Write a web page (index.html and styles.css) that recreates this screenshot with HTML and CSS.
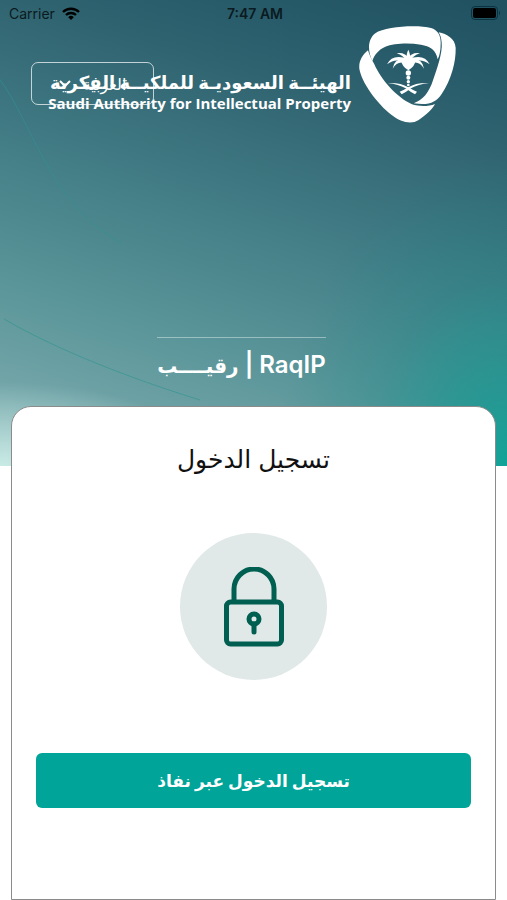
FILE: index.html
```html
<!DOCTYPE html>
<html lang="ar">
<head>
  <meta charset="UTF-8">
  <meta name="viewport" content="width=device-width, initial-scale=1.0">
  <title>RaqIP | رقيب</title>
  <link rel="stylesheet" href="styles.css">
</head>
<body>

  <!-- Background lines -->
  <svg class="bg-lines" viewBox="0 0 507 466" preserveAspectRatio="none" aria-hidden="true">
    <path d="M0 80 C22 108 40 165 75 205 C90 223 104 232 122 244"/>
    <path d="M4 319 C45 343 110 372 200 400"/>
  </svg>

  <!-- Status bar -->
  <div class="status-bar">
    <div class="carrier">
      <span>Carrier</span>
      <svg class="wifi" viewBox="0 0 18 13" aria-hidden="true">
        <path d="M1 5 A11.5 11.5 0 0 1 17 5"/>
        <path d="M4 8 A7.2 7.2 0 0 1 14 8"/>
        <path class="dot" d="M9 13 L6.2 10.2 A4 4 0 0 1 11.8 10.2 Z"/>
      </svg>
    </div>
    <div class="time">7:47 AM</div>
    <div class="battery-box">
      <svg class="battery" viewBox="0 0 30 14" aria-hidden="true">
        <rect class="shell" x="0.5" y="0.5" width="26" height="13" rx="3.5"/>
        <rect x="2" y="2" width="23" height="10" rx="2"/>
        <path class="cap" d="M28 4.5 Q30 7 28 9.5 Z"/>
      </svg>
    </div>
  </div>

  <!-- Header with logo and language button -->
  <header class="header">
    <div class="org-name">
      <p class="org-ar" dir="rtl">الهيئــة السعوديـة للملكيــة الفكرية</p>
      <p class="org-en">Saudi Authority for Intellectual Property</p>
    </div>
    <svg class="logo" viewBox="26 32 291 291" role="img" aria-label="SAIP">
      <path d="M66 137 C51 105 52 72 75 54 C105 32 205 28 242 38 C262 44 272 60 271 85 C271 105 268 120 262 132 C258 104 238 92 212 88 C175 82 130 84 105 94 C85 103 72 118 66 137Z"/>
      <path d="M265 51 C290 56 314 70 316 97 C317 140 303 192 274 236 C256 262 235 271 190 264 C218 254 236 232 248 195 C260 160 277 112 274 82 C273 68 270 60 265 51Z"/>
      <path d="M53 105 C35 120 25 138 27 160 C33 200 80 265 125 300 C150 320 183 329 205 314 C228 298 246 282 254 266 C235 274 205 274 185 267 C140 247 92 193 72 147 C64 132 57 120 53 105Z"/>
      <!-- palm leaves -->
      <path d="M174 103 Q182 118 178 136 H170 Q166 118 174 103Z"/>
      <path d="M139 114 Q162 109 178 131 L171 140 Q160 120 139 114Z"/>
      <path d="M209 114 Q186 109 170 131 L177 140 Q188 120 209 114Z"/>
      <path d="M110 147 Q127 112 176 132 L172 145 Q138 125 110 147Z"/>
      <path d="M238 147 Q221 112 172 132 L176 145 Q210 125 238 147Z"/>
      <path d="M127 160 Q132 123 175 133 L174 148 Q144 131 127 160Z"/>
      <path d="M221 160 Q216 123 173 133 L174 148 Q204 131 221 160Z"/>
      <path d="M152 134 H196 Q194 153 174 165 Q154 153 152 134Z"/>
      <!-- trunk -->
      <circle cx="174" cy="173" r="8"/>
      <circle cx="174" cy="187" r="6"/>
      <circle cx="174" cy="199" r="5"/>
      <circle cx="174" cy="209" r="4"/>
      <!-- swords -->
      <path d="M112 203 Q150 201 174 216 Q190 226 200 229 L194 237 Q180 230 166 219 Q145 207 112 203Z"/>
      <path d="M236 203 Q198 201 174 216 Q158 226 148 229 L154 237 Q168 230 182 219 Q203 207 236 203Z"/>
    </svg>
    <button class="lang-btn" type="button" dir="rtl">
      العربية
      <svg class="chevron" viewBox="0 0 12 8" aria-hidden="true"><path d="M1 1 L6 6 L11 1"/></svg>
    </button>
  </header>

  <!-- App name -->
  <div class="app-name">
    <h1 dir="ltr"><bdi>رقيــــب</bdi> | RaqIP</h1>
  </div>

  <!-- Login card -->
  <main class="card">
    <h2 class="title" dir="rtl">تسجيل الدخول</h2>
    <div class="lock-circle">
      <svg class="lock" viewBox="0 0 60 80" aria-hidden="true">
        <path d="M10 33 V22 A20 20 0 0 1 50 22 V33"/>
        <rect x="2.5" y="35" width="55" height="42" rx="4"/>
        <circle cx="30" cy="52" r="5"/>
        <path d="M30 57 V65"/>
      </svg>
    </div>
    <button class="login-btn" type="button" dir="rtl">تسجيل الدخول عبر نفاذ</button>
  </main>

</body>
</html>
```
FILE: styles.css
```css
:root {
  --primary-color: #00a499;
  --lock-color: #005f50;
  --circle-color: #e0e9e8;
  --card-border: #8b8b8b;
}

* {
  margin: 0;
  padding: 0;
  box-sizing: border-box;
}

body {
  font-family: Inter, 'DejaVu Sans', sans-serif;
  min-height: 100vh;
  display: flex;
  flex-direction: column;
  position: relative;
  background:
    radial-gradient(ellipse 210px 84px at 0 466px, #c9ebe6 0%, rgba(201, 235, 230, 0.65) 35%, rgba(201, 235, 230, 0) 100%) 0 0 / 100% 466px no-repeat,
    radial-gradient(ellipse 230px 310px at 100% 466px, #12a398 0%, rgba(18, 155, 146, 0.7) 22%, rgba(18, 140, 135, 0.25) 60%, rgba(18, 130, 130, 0) 100%) 0 0 / 100% 466px no-repeat,
    linear-gradient(197deg, #205262 2%, #2f6370 24%, #437d86 48%, #5a9599 70%, #7fadb0 96%) 0 0 / 100% 466px no-repeat,
    #fff;
}

.bg-lines {
  position: absolute;
  top: 0;
  left: 0;
  width: 100%;
  height: 466px;
  z-index: -1;
  fill: none;
  stroke: #2f9590;
  stroke-width: 1;
  opacity: 0.6;
}

/* Status bar */
.status-bar {
  display: grid;
  grid-template-columns: 1fr auto 1fr;
  align-items: center;
  height: 26px;
  padding: 0 6px 0 9px;
  font-size: 14px;
  color: #0b1a20;
}

.carrier {
  display: flex;
  align-items: center;
  gap: 7px;
}

.wifi {
  width: 18px;
  height: 13px;
  fill: none;
  stroke: #000;
  stroke-width: 2.4;
}

.wifi .dot {
  fill: #000;
  stroke: none;
}

.time {
  font-weight: 600;
}

.battery-box {
  display: flex;
  justify-content: flex-end;
}

.battery {
  width: 30px;
  height: 14px;
}

.battery .shell {
  fill: none;
  stroke: #0c3340;
}

.battery .cap {
  fill: #0c3340;
}

/* Header */
.header {
  display: flex;
  justify-content: flex-end;
  gap: 8px;
  padding-right: 51px;
  position: relative;
  color: #fff;
}

.org-name {
  padding-top: 46px;
  text-align: right;
  white-space: nowrap;
}

.org-ar {
  font-size: 18px;
  font-weight: bold;
  line-height: 22px;
}

.org-en {
  font-family: 'Open Sans', sans-serif;
  font-size: 15px;
  font-weight: bold;
  line-height: 18px;
}

.logo {
  width: 97px;
  height: 97px;
  fill: #fff;
}

/* Language button lies over the organisation name */
.lang-btn {
  position: absolute;
  top: 36px;
  left: 31px;
  width: 123px;
  height: 43px;
  display: flex;
  align-items: center;
  justify-content: center;
  gap: 12px;
  background: none;
  border: 1px solid rgba(255, 255, 255, 0.7);
  border-radius: 7px;
  color: #fff;
  font-family: inherit;
  font-size: 16px;
  cursor: pointer;
}

.chevron {
  width: 12px;
  height: 8px;
  fill: none;
  stroke: #fff;
  stroke-width: 2;
}

/* App name */
.app-name {
  align-self: center;
  margin-top: 214px;
  margin-right: 24px;
  padding-top: 10px;
  border-top: 1px solid rgba(255, 255, 255, 0.4);
  color: #fff;
}

.app-name h1 {
  font-size: 24px;
  font-weight: 600;
  line-height: 34px;
}

.app-name bdi {
  font-size: 20px;
  line-height: 20px;
}

/* Login card */
.card {
  flex: 1;
  display: flex;
  flex-direction: column;
  align-items: center;
  margin: 24px 11px 0;
  padding: 32px 24px 90px;
  background-color: #fff;
  border: 1px solid var(--card-border);
  border-radius: 20px 20px 0 0;
}

.title {
  font-size: 25px;
  font-weight: normal;
  line-height: 40px;
  color: #111;
}

.lock-circle {
  display: flex;
  justify-content: center;
  align-items: center;
  width: 147px;
  height: 147px;
  margin: 54px 0 73px;
  border-radius: 50%;
  background-color: var(--circle-color);
}

.lock {
  width: 60px;
  height: 80px;
  fill: none;
  stroke: var(--lock-color);
  stroke-width: 5;
  stroke-linecap: round;
}

.login-btn {
  width: 100%;
  height: 55px;
  border: none;
  border-radius: 6px;
  background-color: var(--primary-color);
  color: #fff;
  font-family: inherit;
  font-size: 17px;
  font-weight: bold;
  cursor: pointer;
}
```
